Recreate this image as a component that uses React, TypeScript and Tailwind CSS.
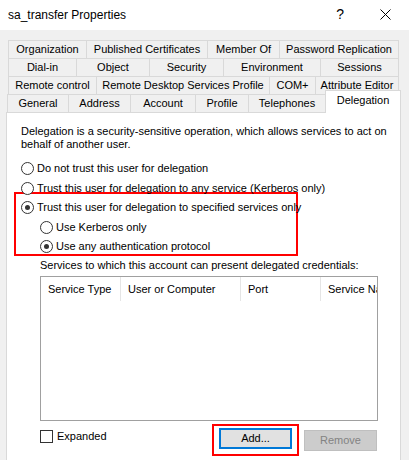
import React from "react";

type Tab = { label: string; w: string; last?: boolean };

const rows: Tab[][] = [
  [
    { label: "Organization", w: "w-[78px]" },
    { label: "Published Certificates", w: "w-[121px]" },
    { label: "Member Of", w: "w-[72px]" },
    { label: "Password Replication", w: "w-[120px]", last: true },
  ],
  [
    { label: "Dial-in", w: "w-[68px]" },
    { label: "Object", w: "w-[73px]" },
    { label: "Security", w: "w-[74px]" },
    { label: "Environment", w: "w-[97px]" },
    { label: "Sessions", w: "w-[79px]", last: true },
  ],
  [
    { label: "Remote control", w: "w-[88px]" },
    { label: "Remote Desktop Services Profile", w: "w-[173px]" },
    { label: "COM+", w: "w-[46px]" },
    { label: "Attribute Editor", w: "w-[84px]", last: true },
  ],
];

const lastRow: Tab[] = [
  { label: "General", w: "w-[61px]" },
  { label: "Address", w: "w-[62px]" },
  { label: "Account", w: "w-[65px]" },
  { label: "Profile", w: "w-[53px]" },
  { label: "Telephones", w: "w-[77px]" },
];

const TabItem = ({ tab }: { tab: Tab }) => (
  <div
    className={`${tab.w} h-[18px] shrink-0 flex items-center justify-center whitespace-nowrap border-t border-l border-[#d9d9d9] bg-[#f0f0f0] ${
      tab.last ? "border-r" : ""
    }`}
  >
    {tab.label}
  </div>
);

const Radio = ({ checked }: { checked?: boolean }) => (
  <div className="w-[13px] h-[13px] shrink-0 rounded-full border border-[#333333] bg-white flex items-center justify-center">
    {checked && <div className="w-[5px] h-[5px] rounded-full bg-[#333333]" />}
  </div>
);

const RadioRow = ({ label, checked, className = "" }: { label: string; checked?: boolean; className?: string }) => (
  <div className={`flex items-center h-[14px] ${className}`}>
    <Radio checked={checked} />
    <span className="ml-[3px] whitespace-nowrap leading-[13px]">{label}</span>
  </div>
);

export default function App() {
  return (
    <div className="w-[409px] h-[460px] overflow-hidden bg-[#f0f0f0] text-black text-[11px] font-['Liberation_Sans',Arial,sans-serif]">
      {/* title bar */}
      <div className="h-[30px] bg-white flex items-center">
        <span className="ml-[8px] text-[12px]">sa_transfer Properties</span>
        <span className="ml-auto text-[14px] leading-none -mt-[2px]">?</span>
        <svg className="ml-[36px] mr-[18px] -mt-[2px]" width="11" height="11" viewBox="0 0 11 11">
          <path d="M0.5 0.5 L10.5 10.5 M10.5 0.5 L0.5 10.5" stroke="#000" strokeWidth="1" />
        </svg>
      </div>

      {/* tabs */}
      <div className="pt-[10px]">
        {rows.map((row, i) => (
          <div key={i} className="flex ml-[8px]">
            {row.map((t) => (
              <TabItem key={t.label} tab={t} />
            ))}
          </div>
        ))}
        <div className="flex items-start ml-[7px] h-[18px]">
          {lastRow.map((t) => (
            <TabItem key={t.label} tab={t} />
          ))}
          <div className="relative z-10 w-[76px] h-[23px] -mt-[4px] shrink-0 bg-white border-t border-l border-r border-[#d9d9d9] text-center leading-[18px]">
            Delegation
          </div>
        </div>
      </div>

      {/* panel */}
      <div className="ml-[6px] w-[395px] h-[360px] bg-white border border-[#d9d9d9]">
        <p className="ml-[14px] mt-[12px] leading-[13px]">
          Delegation is a security-sensitive operation, which allows services to act on
          <br />
          behalf of another user.
        </p>

        <RadioRow className="ml-[14px] mt-[10px]" label="Do not trust this user for delegation" />
        <RadioRow className="ml-[14px] mt-[6px]" label="Trust this user for delegation to any service (Kerberos only)" />

        <div className="ml-[7px] -mt-[3px] w-[284px] border-2 border-[#ff0000] pl-[5px] pt-[6px] pb-[1px]">
          <RadioRow checked label="Trust this user for delegation to specified services only" />
          <RadioRow className="ml-[19px] mt-[6px]" label="Use Kerberos only" />
          <RadioRow checked className="ml-[19px] mt-[5px]" label="Use any authentication protocol" />
        </div>

        <div className="ml-[33px] mt-[3px] leading-[13px]">
          Services to which this account can present delegated credentials:
        </div>

        <div className="ml-[33px] mt-[4px] w-[338px] h-[145px] border border-[#a0a0a0] overflow-hidden">
          <div className="flex h-[24px] whitespace-nowrap">
            <div className="w-[80px] shrink-0 pl-[7px] flex items-center border-r border-[#e5e5e5]">Service Type</div>
            <div className="w-[120px] shrink-0 pl-[7px] flex items-center border-r border-[#e5e5e5]">User or Computer</div>
            <div className="w-[80px] shrink-0 pl-[7px] flex items-center border-r border-[#e5e5e5]">Port</div>
            <div className="w-[80px] shrink-0 pl-[7px] flex items-center">Service Name</div>
          </div>
        </div>

        <div className="flex items-start ml-[33px] mt-[3px]">
          <div className="w-[172px] mt-[6px] flex items-center h-[13px]">
            <div className="w-[13px] h-[13px] border border-[#333333] bg-white" />
            <span className="ml-[4px] leading-[13px]">Expanded</span>
          </div>
          <div className="w-[87px] h-[32px] border-2 border-[#ff0000] pl-[5px] pt-[2px]">
            <div className="w-[73px] h-[21px] border-2 border-[#0078d7] bg-[#e1e1e1] flex items-center justify-center">
              Add...
            </div>
          </div>
          <div className="ml-[5px] mt-[6px] w-[73px] h-[21px] border border-[#bfbfbf] bg-[#cccccc] text-[#838383] flex items-center justify-center">
            Remove
          </div>
        </div>
      </div>
    </div>
  );
}
